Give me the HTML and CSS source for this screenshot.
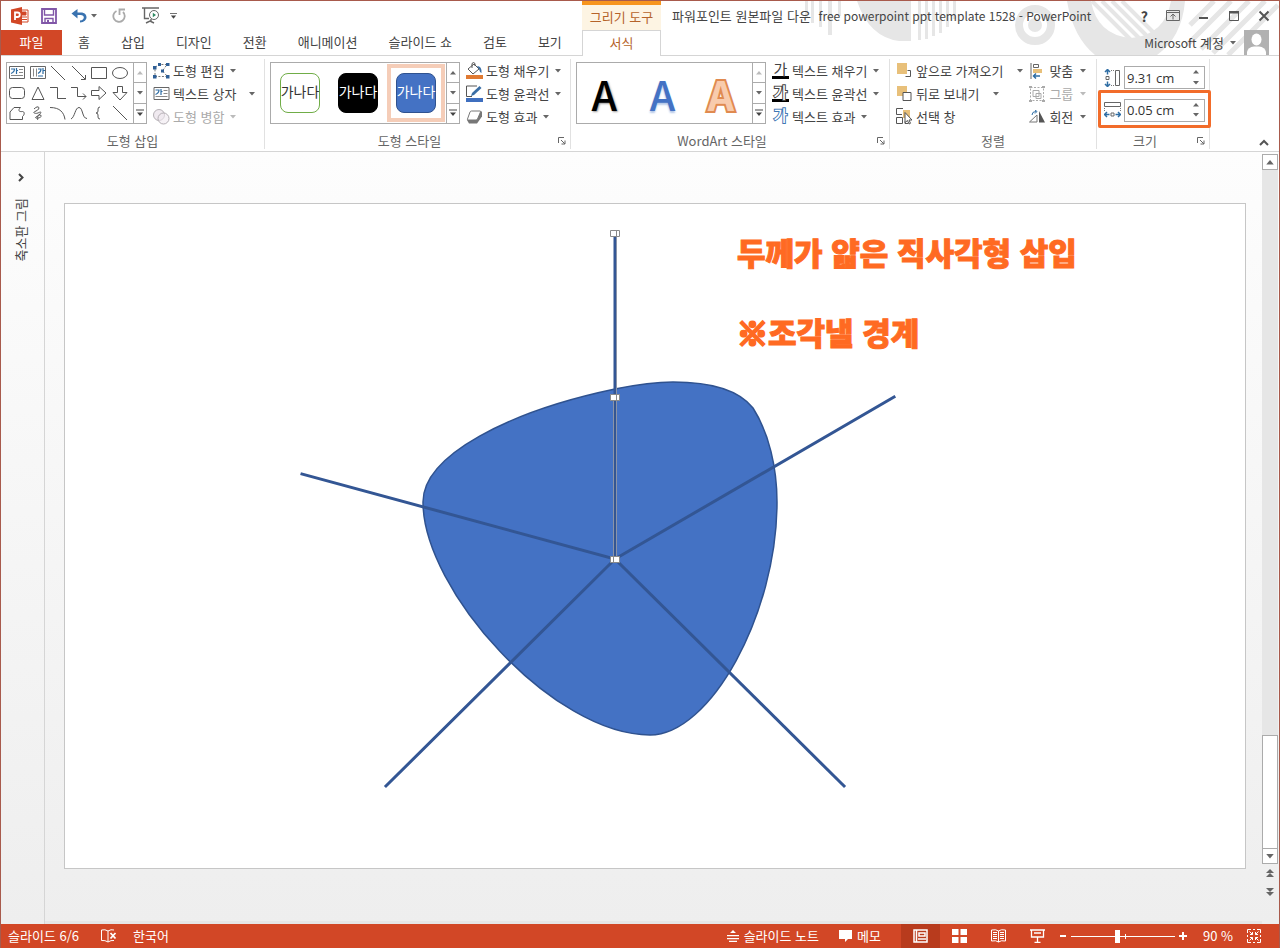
FILE: index.html
```html
<!DOCTYPE html>
<html lang="ko">
<head>
    <meta charset="UTF-8">
    <meta name="viewport" content="width=device-width, initial-scale=1.0">
    <title>파워포인트 원본파일 다운 free powerpoint ppt template 1528 - PowerPoint</title>
    <link rel="stylesheet" href="styles.css">
</head>
<body>
    <!-- Shared glyphs -->
    <svg class="defs" width="0" height="0" aria-hidden="true">
        <symbol id="caret" viewBox="0 0 6 4"><path d="M0 0h6L3 3.5z" fill="currentColor"/></symbol>
        <symbol id="caret-up" viewBox="0 0 6 4"><path d="M0 3.5h6L3 0z" fill="currentColor"/></symbol>
        <symbol id="more" viewBox="0 0 8 8"><path d="M0 .5h8v1H0zM1 3.5h6L4 7z" fill="currentColor"/></symbol>
        <symbol id="launch" viewBox="0 0 8 8"><path d="M.5 6V.5H6M3 3l4 4M7 3.500V7H3.500" fill="none" stroke="currentColor"/></symbol>
        <symbol id="textbox" viewBox="0 0 16 14">
            <path d="M.5.500h15v12H.5z" fill="#fff" stroke="#666"/>
            <path d="M10 3.500h4M10 6.500h4M2 9.500h12" stroke="#888"/>
            <path d="M2 3h3.500q0 3-3.500 4.500M7.500 2v6M7.500 4.500H9" fill="none" stroke="#2e6da4" stroke-width="1.200"/>
        </symbol>
    </svg>

    <div class="window">
        <header class="header">
            <svg class="backdrop" width="480" height="54" viewBox="800 0 480 54" fill="#e6e6e6" aria-hidden="true">
                <path d="M806 0h3v16h-3zM812 0h3v22h-3zM820 0h3v26h-3zM829 0h4v34h-4zM839 0h3v15h-3z"/>
                <path d="M858 0h42v40q-30-4-42-40zM900 0h12v40h-12zM919 0h3v39h-3zM926 0h3v38h-3zM933 0h3v35h-3zM940 0h3v32h-3zM947 0h3v26h-3zM954 0h3v18h-3z"/>
                <circle cx="1036" cy="24" r="16" fill="none" stroke="#e6e6e6" stroke-width="8"/>
                <circle cx="1036" cy="24" r="7"/>
                <path d="M1068 0h24q6 34 40 37 34-3 40-37h14q-3 36-28 54h-62q-22-18-28-54z"/>
                <path d="M1093 0l44 44M1103 0l44 44M1113 0l42 42M1123 0l36 36" stroke="#e6e6e6" stroke-width="4"/>
                <path d="M1215 0l-24 24M1232 0l-44 44M1250 0l-48 48M1266 0l-52 52M1279 4l-50 50" stroke="#e6e6e6" stroke-width="5"/>
            </svg>

            <div class="header-left">
                <div class="quick-access">
                    <svg class="app-logo" width="18" height="18" viewBox="0 0 18 18">
                        <path d="M9 3h8v12H9z" fill="#fff" stroke="#d24726"/>
                        <path d="M11 5h4v3h-4zM11 10h5M11 12.500h5" fill="#d24726" stroke="#d24726"/>
                        <path d="M0 2.500L11 0v18L0 15.500z" fill="#d24726"/>
                        <path d="M4 13V5.500h2.500a2 2 0 0 1 0 4.500H4" fill="none" stroke="#fff" stroke-width="1.800"/>
                    </svg>
                    <button class="icon-btn save" aria-label="저장">
                        <svg width="16" height="16" viewBox="0 0 16 16"><path d="M1 1h14v14H1z" fill="#fff" stroke="#8157a8" stroke-width="1.800"/><path d="M3.500 1v6h9V1M4 15v-4.500h8V15" fill="none" stroke="#8157a8" stroke-width="1.400"/><path d="M6 12h2v3H6z" fill="#8157a8"/></svg>
                    </button>
                    <button class="icon-btn undo" aria-label="실행 취소">
                        <svg width="17" height="14" viewBox="0 0 17 14"><path d="M6.500 0v3.500H10c7 0 8 9-1 10v-2c5-.5 5-5.500.500-5.500H6.500V9.500L.5 4.500z" fill="#3a73b0"/></svg>
                        <svg class="caret"><use href="#caret"/></svg>
                    </button>
                    <button class="icon-btn redo" aria-label="다시 실행">
                        <svg width="14" height="15" viewBox="0 0 14 15"><path d="M4.500 3A5.700 5.700 0 1 0 11 4M7.500 7V1.500H13" fill="none" stroke="#aaa" stroke-width="1.800"/></svg>
                    </button>
                    <button class="icon-btn present" aria-label="처음부터 시작">
                        <svg width="18" height="17" viewBox="0 0 18 17" fill="none" stroke="#666"><path d="M0 1h17M2.500 1v10.500H7M9 12v2M4 16l4-2 4 2" stroke-width="1.400"/><circle cx="12" cy="8" r="4.500" fill="#fff"/><path d="M10.800 5.800v4.400L14 8z" fill="#2f8a63" stroke="none"/></svg>
                    </button>
                    <button class="icon-btn" aria-label="빠른 실행 도구 모음 사용자 지정"><svg width="7" height="8"><use href="#more"/></svg></button>
                </div>
                <nav class="tabs">
                    <a class="tab tab-file" href="#">파일</a>
                    <a class="tab" href="#">홈</a>
                    <a class="tab" href="#">삽입</a>
                    <a class="tab" href="#">디자인</a>
                    <a class="tab" href="#">전환</a>
                    <a class="tab" href="#">애니메이션</a>
                    <a class="tab" href="#">슬라이드 쇼</a>
                    <a class="tab" href="#">검토</a>
                    <a class="tab" href="#">보기</a>
                </nav>
            </div>

            <div class="context-tab">
                <div class="context-title">그리기 도구</div>
                <a class="context-active" href="#">서식</a>
            </div>

            <div class="header-right">
                <div class="title-row">
                    <h1 class="title">파워포인트 원본파일 다운 <span class="latin">free powerpoint ppt template 1528 - PowerPoint</span></h1>
                    <div class="window-controls">
                        <button aria-label="도움말" class="help">?</button>
                        <button aria-label="리본 메뉴 표시 옵션"><svg width="14" height="12" viewBox="0 0 14 12" fill="none" stroke="#666"><path d="M.5.500h13v10H.5zM.5 2.500h13M7 9.500V4.500M4.500 6.500L7 4l2.500 2.500"/></svg></button>
                        <button aria-label="최소화"><svg width="12" height="12" viewBox="0 0 12 12"><path d="M1 7h9v2H1z" fill="#555"/></svg></button>
                        <button aria-label="최대화"><svg width="12" height="12" viewBox="0 0 12 12"><path d="M1.500 2v8.500h9V2" fill="none" stroke="#555"/><path d="M1 1h10v2.500H1z" fill="#555"/></svg></button>
                        <button aria-label="닫기"><svg width="12" height="12" viewBox="0 0 12 12"><path d="M1.500 1.500l9 9M10.500 1.500l-9 9" stroke="#555" stroke-width="2"/></svg></button>
                    </div>
                </div>
                <div class="account-row">
                    <button class="account"><span><span class="latin">Microsoft</span> 계정</span><svg class="caret"><use href="#caret"/></svg></button>
                    <svg class="avatar" width="25" height="25" viewBox="0 0 25 25"><path d="M0 0h25v25H0z" fill="#b1b1b1"/><ellipse cx="12.500" cy="9.500" rx="5" ry="6" fill="#fff"/><path d="M3 25v-3q1-5 7-5.500h5q6 .5 7 5.500v3z" fill="#fff"/></svg>
                </div>
            </div>
        </header>

        <section class="ribbon">
            <div class="group group-insert">
                <div class="group-body">
                    <div class="gallery">
                        <div class="shape-grid">
                            <button aria-label="텍스트 상자"><svg width="16" height="14"><use href="#textbox"/></svg></button>
                            <button aria-label="세로 텍스트 상자"><svg width="16" height="14" viewBox="0 0 16 14"><path d="M.5.500h15v12H.5z" fill="#fff" stroke="#666"/><path d="M3.500 2.500v8M6.500 2.500v8" stroke="#888"/><path d="M8 3h3q0 3-3 4.500M13 2v6M13 4.500h2M8 10h5" fill="none" stroke="#2e6da4" stroke-width="1.200"/></svg></button>
                            <button aria-label="선"><svg class="shape"><path d="M1 0l14 14"/></svg></button>
                            <button aria-label="화살표"><svg class="shape"><path d="M1 0l13 13M14.500 9v4.500H10"/></svg></button>
                            <button aria-label="직사각형"><svg class="shape"><path d="M.5 1.500h15v11H.5z"/></svg></button>
                            <button aria-label="타원"><svg class="shape"><ellipse cx="8" cy="7" rx="7.500" ry="5.500"/></svg></button>
                            <button aria-label="둥근 직사각형"><svg class="shape"><rect x=".5" y="1.500" width="15" height="11" rx="3"/></svg></button>
                            <button aria-label="삼각형"><svg class="shape"><path d="M8 1l6 12.500H2z"/></svg></button>
                            <button aria-label="꺾인 연결선"><svg class="shape"><path d="M0 1.500h7.500v11H16"/></svg></button>
                            <button aria-label="꺾인 화살표"><svg class="shape"><path d="M0 1.500h6.500v9H15M12 7.500l3 3-3 3"/></svg></button>
                            <button aria-label="오른쪽 화살표"><svg class="shape"><path d="M.5 4.500H8V.5L15 7l-7 6.500v-4H.5z"/></svg></button>
                            <button aria-label="아래쪽 화살표"><svg class="shape"><path d="M5.500.500v6h-4.500L8 14l7-7.500h-4.500v-6z"/></svg></button>
                            <button aria-label="자유형"><svg class="shape"><path d="M1 13.500V6l4-4.500h6.500c-3 3-1.500 4.500 2 4 2 0 2.500 3 0 5v3z"/></svg></button>
                            <button aria-label="자유 곡선"><svg class="shape"><path d="M4 3c5-5 7 0 2 2s0 3 2 2 4-2 2 1-6 3-4 4 8-2 4-3-1 5-3 5"/></svg></button>
                            <button aria-label="호"><svg class="shape"><path d="M0 1.500c10 0 14 5 15 12"/></svg></button>
                            <button aria-label="곡선"><svg class="shape"><path d="M0 13C4 11 4 1.500 8 1.500s3 11 8 11"/></svg></button>
                            <button aria-label="중괄호"><svg class="shape"><path d="M9 1Q7 1 7 3v2q0 2-2 2 2 0 2 2v2q0 2 2 2"/></svg></button>
                            <button aria-label="선"><svg class="shape"><path d="M1 0l14 14"/></svg></button>
                        </div>
                        <div class="gallery-scroll">
                            <button disabled aria-label="위로"><svg class="caret"><use href="#caret-up"/></svg></button>
                            <button aria-label="아래로"><svg class="caret"><use href="#caret"/></svg></button>
                            <button aria-label="자세히"><svg width="8" height="8"><use href="#more"/></svg></button>
                        </div>
                    </div>
                    <div class="commands">
                        <button class="cmd">
                            <svg width="17" height="16" viewBox="0 0 17 16"><path d="M2 4l5-2.500h7L9.500 8l5 5.500H2z" fill="none" stroke="#777" stroke-dasharray="2 1.500"/><path d="M0 3h3.500v3.500H0zM5 0h3v3H5zM13 0h3.500v3H13zM8 6.500h3v3H8zM0 12h3.500v3.500H0zM13 12h3.500v3.500H13z" fill="#2f5f96"/></svg>
                            도형 편집<svg class="caret"><use href="#caret"/></svg>
                        </button>
                        <button class="cmd split">
                            <svg width="17" height="14"><use href="#textbox"/></svg>
                            텍스트 상자<svg class="caret"><use href="#caret"/></svg>
                        </button>
                        <button class="cmd" disabled>
                            <svg width="17" height="16" viewBox="0 0 17 16"><g fill="#f0eaf0" stroke="#b5b0b5"><circle cx="6" cy="6" r="5.500"/><circle cx="10.500" cy="9.500" r="5.500" fill-opacity=".6"/></g></svg>
                            도형 병합<svg class="caret"><use href="#caret"/></svg>
                        </button>
                    </div>
                </div>
                <div class="group-footer"><span>도형 삽입</span></div>
            </div>

            <div class="group group-styles">
                <div class="group-body">
                    <div class="gallery">
                        <div class="style-list">
                            <button class="swatch"><span class="swatch-outline">가나다</span></button>
                            <button class="swatch"><span class="swatch-black">가나다</span></button>
                            <button class="swatch selected"><span class="swatch-blue">가나다</span></button>
                        </div>
                        <div class="gallery-scroll">
                            <button aria-label="위로"><svg class="caret"><use href="#caret-up"/></svg></button>
                            <button aria-label="아래로"><svg class="caret"><use href="#caret"/></svg></button>
                            <button aria-label="자세히"><svg width="8" height="8"><use href="#more"/></svg></button>
                        </div>
                    </div>
                    <div class="commands">
                        <button class="cmd">
                            <svg width="17" height="17" viewBox="0 0 17 17"><path d="M2 7l6-5 5 5-6 5z" fill="#fff" stroke="#555"/><path d="M6 6V1.500q1.500-2 3 0V4" fill="none" stroke="#555"/><path d="M11 4q5 0 4.500 7-2-1-2.500-4z" fill="#3a6ea5"/><path d="M0 13h17v4H0z" fill="#e07a32"/></svg>
                            도형 채우기<svg class="caret"><use href="#caret"/></svg>
                        </button>
                        <button class="cmd">
                            <svg width="17" height="17" viewBox="0 0 17 17"><path d="M11 1H.5v10.500H6" fill="none" stroke="#555"/><path d="M5 11l1-3 7.500-7 2 2L8 10z" fill="#3a6ea5"/><path d="M0 13h17v4H0z" fill="#3f6fbf"/></svg>
                            도형 윤곽선<svg class="caret"><use href="#caret"/></svg>
                        </button>
                        <button class="cmd">
                            <svg width="17" height="14" viewBox="0 0 17 14"><path d="M1 10l2 3.500h8l5-7V2L15 1z" fill="#777"/><path d="M5.500 1H14q1 0 .5 1l-3 7q-.5 1-1.500 1H2q-1 0-.5-1L4 2q.5-1 1.500-1z" fill="#fff" stroke="#777"/></svg>
                            도형 효과<svg class="caret"><use href="#caret"/></svg>
                        </button>
                    </div>
                </div>
                <div class="group-footer"><span>도형 스타일</span><button aria-label="도형 서식"><svg width="8" height="8"><use href="#launch"/></svg></button></div>
            </div>

            <div class="group group-wordart">
                <div class="group-body">
                    <div class="gallery">
                        <div class="style-list">
                            <button class="wordart wordart-black">A</button>
                            <button class="wordart wordart-blue">A</button>
                            <button class="wordart wordart-orange">A</button>
                        </div>
                        <div class="gallery-scroll">
                            <button disabled aria-label="위로"><svg class="caret"><use href="#caret-up"/></svg></button>
                            <button aria-label="아래로"><svg class="caret"><use href="#caret"/></svg></button>
                            <button aria-label="자세히"><svg width="8" height="8"><use href="#more"/></svg></button>
                        </div>
                    </div>
                    <div class="commands">
                        <button class="cmd">
                            <span class="glyph glyph-bar">가</span>
                            텍스트 채우기<svg class="caret"><use href="#caret"/></svg>
                        </button>
                        <button class="cmd">
                            <span class="glyph glyph-bar glyph-hollow">가</span>
                            텍스트 윤곽선<svg class="caret"><use href="#caret"/></svg>
                        </button>
                        <button class="cmd">
                            <span class="glyph glyph-glow">가</span>
                            텍스트 효과<svg class="caret"><use href="#caret"/></svg>
                        </button>
                    </div>
                </div>
                <div class="group-footer"><span>WordArt 스타일</span><button aria-label="텍스트 효과 서식"><svg width="8" height="8"><use href="#launch"/></svg></button></div>
            </div>

            <div class="group group-arrange">
                <div class="group-body">
                    <div class="commands">
                        <button class="cmd split">
                            <svg width="16" height="15" viewBox="0 0 16 15"><path d="M9.500 13.500h5v-6h-3" fill="none" stroke="#555"/><path d="M1 0h10v11H1z" fill="#e8c07a"/></svg>
                            앞으로 가져오기<svg class="caret"><use href="#caret"/></svg>
                        </button>
                        <button class="cmd split">
                            <svg width="16" height="15" viewBox="0 0 16 15"><path d="M1 0h10v10H1z" fill="#e8c07a"/><path d="M7 6.500h8v8H7z" fill="#fff" stroke="#555"/></svg>
                            뒤로 보내기<svg class="caret"><use href="#caret"/></svg>
                        </button>
                        <button class="cmd">
                            <svg width="16" height="17" viewBox="0 0 16 17"><path d="M7 2h7v8H7z" fill="#e8c07a"/><path d="M7 .5H.5v6H6M.5 9.500h6v6h-6zM9 13.500v2h3" fill="none" stroke="#555"/><path d="M9 4.500v10l2.500-2 1.500 3.500 1.500-.700L13 12h3z" fill="#fff" stroke="#555"/></svg>
                            선택 창
                        </button>
                    </div>
                    <div class="commands commands-align">
                        <button class="cmd">
                            <svg width="16" height="16" viewBox="0 0 16 16"><path d="M2 0v16" stroke="#666"/><path d="M4.500 1.500h5v3h-5z" fill="#fff" stroke="#666"/><path d="M4 6h9v4H4z" fill="#e8c07a"/><path d="M4 13h7M7 10.500L4.500 13 7 15.500" fill="none" stroke="#2e6da4" stroke-width="1.500"/></svg>
                            맞춤<svg class="caret"><use href="#caret"/></svg>
                        </button>
                        <button class="cmd" disabled>
                            <svg width="16" height="16" viewBox="0 0 16 16" fill="none" stroke="#aaa"><path d="M1.500 1.500h13v13h-13z" stroke-dasharray="2 1.500"/><path d="M4 4.500h6v6H4zM7 7.500h5v5H7z"/><path d="M0 1h3M13 1h3M0 15h3M13 15h3" stroke-width="2"/></svg>
                            그룹<svg class="caret"><use href="#caret"/></svg>
                        </button>
                        <button class="cmd">
                            <svg width="16" height="13" viewBox="0 0 16 13"><path d="M.5 12L8 5v7z" fill="#fff" stroke="#777"/><path d="M10 1l6 11.500h-6z" fill="#555"/><path d="M3 5q0-3.500 4-3.500M6 0l2 1.500L6 3.500" fill="none" stroke="#2e6da4"/></svg>
                            회전<svg class="caret"><use href="#caret"/></svg>
                        </button>
                    </div>
                </div>
                <div class="group-footer"><span>정렬</span></div>
            </div>

            <div class="group group-size">
                <div class="group-body size-body">
                    <div class="size-row">
                        <label for="shape-height" aria-label="높이"><svg width="17" height="18" viewBox="0 0 17 18"><path d="M3.500.500v5M1 3l2.500-2.500L6 3M3.500 17.500v-5M1 15l2.500 2.500L6 15" fill="none" stroke="#2e6da4" stroke-width="1.500"/><path d="M2 7.500h3v3H2zM11.500 1.500h4v15h-4z" fill="#fff" stroke="#666"/><path d="M7 1.500h3M7 16.500h3" stroke="#777" stroke-dasharray="1 1"/></svg></label>
                        <div class="spinner">
                            <input id="shape-height" type="text" value="9.31 cm">
                            <div class="spin-buttons">
                                <button aria-label="높이 증가"><svg class="caret"><use href="#caret-up"/></svg></button>
                                <button aria-label="높이 감소"><svg class="caret"><use href="#caret"/></svg></button>
                            </div>
                        </div>
                    </div>
                    <div class="size-row highlight">
                        <label for="shape-width" aria-label="너비"><svg width="17" height="18" viewBox="0 0 17 18"><path d="M.500 13.500h5M3 11L.5 13.500 3 16M16.500 13.500h-5M14 11l2.500 2.500L14 16" fill="none" stroke="#2e6da4" stroke-width="1.500"/><path d="M7 12h3v3H7zM.5 1.500h16v4H.5z" fill="#fff" stroke="#666"/><path d="M.5 7v3M16.500 7v3" stroke="#777" stroke-dasharray="1 1"/></svg></label>
                        <div class="spinner">
                            <input id="shape-width" type="text" value="0.05 cm">
                            <div class="spin-buttons">
                                <button aria-label="너비 증가"><svg class="caret"><use href="#caret-up"/></svg></button>
                                <button aria-label="너비 감소"><svg class="caret"><use href="#caret"/></svg></button>
                            </div>
                        </div>
                    </div>
                </div>
                <div class="group-footer"><span>크기</span><button aria-label="크기 및 위치"><svg width="8" height="8"><use href="#launch"/></svg></button></div>
            </div>

            <button class="collapse" aria-label="리본 메뉴 축소"><svg width="10" height="7" viewBox="0 0 10 7"><path d="M1 6l4-4 4 4" fill="none" stroke="#555" stroke-width="2"/></svg></button>
        </section>

        <main class="workspace">
            <button class="thumb-pane">
                <svg width="6" height="9" viewBox="0 0 6 9"><path d="M1 1l3.500 3.500L1 8" fill="none" stroke="#444" stroke-width="2"/></svg>
                <span>축소판 그림</span>
            </button>

            <div class="stage">
                <!-- viewBox keeps the window's coordinates -->
                <svg class="slide" viewBox="65 204 1180 664">
                    <path class="blob" d="M423 502C423 455 510 411 615 389 635 385 655 382 673 382 708 382 738 389 753 408 769 433 777 468 777 502 777 615 710 735 650 735 553 735 423 590 423 502z"/>
                    <g class="cuts">
                        <path d="M615 559L894 397"/>
                        <path d="M615 559L302 474"/>
                        <path d="M615 559L386 786"/>
                        <path d="M615 559L844 786"/>
                        <path d="M615 233V559"/>
                    </g>
                    <path class="selection" d="M613.500 397V559M616.500 233V559"/>
                    <g class="handles">
                        <path d="M610.500 230.500h9v6h-9zM616.500 230.500v6"/>
                        <path d="M610.500 394.500h9v6h-9zM616.500 394.500v6"/>
                        <path d="M610.500 556.500h9v6h-9zM613.500 556.500v6"/>
                    </g>
                    <text class="note" x="737" y="265">두께가 얇은 직사각형 삽입</text>
                    <text class="note" x="737" y="345"><tspan class="mark">※</tspan>조각낼 경계</text>
                </svg>
            </div>

            <div class="scrollbar">
                <button class="scroll-btn" aria-label="위로 스크롤"><svg width="8" height="5"><use href="#caret-up"/></svg></button>
                <div class="track"><div class="thumb"></div></div>
                <button class="scroll-btn" aria-label="아래로 스크롤"><svg width="8" height="5"><use href="#caret"/></svg></button>
                <button class="page-btn" aria-label="이전 슬라이드"><svg width="8" height="9" viewBox="0 0 8 9"><path d="M4 0l4 4H0zM4 4l4 4H0z" fill="#666"/></svg></button>
                <button class="page-btn" aria-label="다음 슬라이드"><svg width="8" height="9" viewBox="0 0 8 9"><path d="M0 1h8L4 5zM0 5h8L4 9z" fill="#666"/></svg></button>
            </div>
        </main>

        <footer class="status">
            <span class="status-count">슬라이드 6/6</span>
            <button class="status-proof" aria-label="맞춤법 검사"><svg width="16" height="14" viewBox="0 0 16 14" fill="none" stroke="#fff"><path d="M7 2Q4 0 .5 1v10.500Q4 11 7 13q3-2 6-1.500M7 2v11M7 2q3-2 6-1"/><path d="M9.500 4l5 5.500M14.500 4l-5 5.500" stroke-width="1.800"/></svg></button>
            <button class="status-lang">한국어</button>

            <div class="status-right">
                <button class="status-notes"><svg width="12" height="12" viewBox="0 0 12 12"><path d="M6 0l3 3H3zM0 5h12v1.300H0zM0 8h12v1.300H0zM2 10.700h8V12H2z" fill="#fff"/></svg>슬라이드 노트</button>
                <button class="status-memo"><svg width="13" height="12" viewBox="0 0 13 12"><path d="M0 0h13v9H9l-3 3V9H0z" fill="#fff"/></svg>메모</button>
                <div class="views">
                    <button class="active" aria-label="기본"><svg width="15" height="14" viewBox="0 0 15 14" fill="none" stroke="#fff" stroke-width="1.500"><path d="M1 1h13v12H1zM3.500 1v12M6 4h6v3H6zM5 10h8"/></svg></button>
                    <button aria-label="여러 슬라이드"><svg width="15" height="14" viewBox="0 0 15 14"><path d="M0 0h6.500v6H0zM8.500 0H15v6H8.500zM0 8h6.500v6H0zM8.500 8H15v6H8.500z" fill="#fff"/></svg></button>
                    <button aria-label="읽기용 보기"><svg width="15" height="14" viewBox="0 0 15 14" fill="none" stroke="#fff"><path d="M7.500 2Q5 0 .5 1v11q4.500-1 7 1 2.500-2 7-1V1q-4.500-1-7 1zM7.500 2v11M2 3.500h4M2 5.500h4M2 7.500h4M2 9.500h4M9 3.500h4M9 5.500h4M9 7.500h4M9 9.500h4"/></svg></button>
                    <button aria-label="슬라이드 쇼"><svg width="15" height="14" viewBox="0 0 15 14" fill="none" stroke="#fff"><path d="M0 1h15M1.500 1.500v6.500h12V1.500M4 4h7M7.500 8v5M4.500 13.500h6" stroke-width="1.300"/></svg></button>
                </div>
                <button class="zoom-step" aria-label="축소"><svg width="8" height="8" viewBox="0 0 8 8"><path d="M1 3h6v2H1z" fill="#fff"/></svg></button>
                <input class="zoom" type="range" min="10" max="200" value="95" aria-label="확대/축소">
                <button class="zoom-step" aria-label="확대"><svg width="8" height="8" viewBox="0 0 8 8"><path d="M0 3h8v2H0zM3 0h2v8H3z" fill="#fff"/></svg></button>
                <span class="zoom-value">90 %</span>
                <button class="fit" aria-label="창에 맞춤"><svg width="14" height="14" viewBox="0 0 14 14" fill="none" stroke="#fff"><path d="M.5 4V.5H4M6 .5h2M10 .5h3.500V4M13.500 6v2M13.500 10v3.500H10M8 13.500H6M4 13.500H.5V10M.5 8V6"/><path d="M5.500 3v2.500H3M8.500 3v2.500H11M5.500 11V8.500H3M8.500 11V8.500H11M2.500 2.500l3 3M11.500 2.500l-3 3M2.500 11.500l3-3M11.500 11.500l-3-3"/></svg></button>
            </div>
        </footer>
    </div>
</body>
</html>
```
FILE: styles.css
```css
* {
    margin: 0;
    padding: 0;
    box-sizing: border-box;
}

body {
    font-family: "Noto Sans CJK KR", "Open Sans", sans-serif;
    font-size: 13px;
    line-height: 16px;
    color: #444;
}

button {
    font: inherit;
    color: inherit;
    background: none;
    border: none;
    cursor: pointer;
    display: flex;
    align-items: center;
    justify-content: center;
    white-space: nowrap;
}

button:disabled {
    color: #aaa;
    cursor: default;
}

a {
    color: inherit;
    text-decoration: none;
}

svg {
    display: block;
    flex: none;
}

.defs {
    position: absolute;
}

.caret {
    width: 6px;
    height: 4px;
    color: #666;
}

button:disabled .caret {
    color: #bbb;
}

.latin {
    font-size: 12px;
}

.window {
    min-height: 100vh;
    display: flex;
    flex-direction: column;
    border: 1px solid #a85a4c;
    border-bottom: none;
    background: #fff;
}

/* Title bar and tabs */
.header {
    position: relative;
    display: flex;
    height: 55px;
}

.backdrop {
    position: absolute;
    top: 0;
    right: 0;
}

.header-left {
    flex: none;
    width: 581px;
    border-bottom: 1px solid #d5d5d5;
}

.quick-access {
    display: flex;
    align-items: center;
    height: 29px;
    padding-left: 10px;
}

.icon-btn {
    gap: 3px;
    height: 20px;
}

.save {
    margin-left: 12px;
}

.undo {
    margin-left: 14px;
}

.redo {
    margin-left: 15px;
}

.present {
    margin: 0 10px 0 16px;
}

.tabs {
    display: flex;
    gap: 1px;
}

.tab {
    height: 25px;
    padding: 0 15px;
    line-height: 24px;
    white-space: nowrap;
}

.tab-file {
    width: 61px;
    padding: 0;
    text-align: center;
    color: #fff;
    background: #d24726;
}

.context-tab {
    flex: none;
    width: 79px;
    text-align: center;
    color: #b5632a;
}

.context-title {
    height: 29px;
    line-height: 24px;
    border-top: 4px solid #f7941d;
    background: #fdf4e3;
}

.context-active {
    display: block;
    height: 26px;
    line-height: 23px;
    border: 1px solid #d5d5d5;
    border-bottom: none;
    background: #fff;
}

.header-right {
    position: relative;
    flex: 1;
    min-width: 0;
    border-bottom: 1px solid #d5d5d5;
}

.title-row {
    display: flex;
    align-items: center;
    justify-content: space-between;
    height: 29px;
    padding: 0 9px 0 11px;
}

.title {
    font-size: 13px;
    font-weight: normal;
    white-space: nowrap;
}

.title .latin {
    margin-left: 4px;
}

.window-controls {
    display: flex;
    gap: 18px;
}

.help {
    font-size: 14px;
    font-weight: bold;
}

.account-row {
    display: flex;
    justify-content: flex-end;
    gap: 8px;
    height: 25px;
    padding-right: 10px;
}

.account {
    gap: 6px;
}

/* Ribbon */
.ribbon {
    display: flex;
    height: 96px;
    padding-top: 3px;
    border-bottom: 1px solid #d5d5d5;
}

.group {
    flex: none;
    display: flex;
    flex-direction: column;
    height: 90px;
    padding-left: 5px;
    border-right: 1px solid #e1e1e1;
}

.group-insert {
    width: 264px;
}

.group-styles {
    width: 306px;
}

.group-wordart {
    width: 319px;
}

.group-arrange {
    width: 207px;
}

.group-size {
    width: 113px;
}

.group-body {
    display: flex;
    height: 69px;
    gap: 5px;
}

.group-footer {
    display: flex;
    align-items: center;
    margin: 5px 0 0 -5px;
    height: 16px;
    color: #666;
}

.group-footer span {
    flex: 1;
    text-align: center;
}

.group-footer button {
    width: 16px;
    height: 16px;
}

.gallery {
    display: flex;
    height: 62px;
    margin-top: 3px;
    border: 1px solid #ababab;
}

.gallery-scroll {
    display: flex;
    flex-direction: column;
    width: 13px;
    border-left: 1px solid #ababab;
}

.gallery-scroll button {
    flex: 1;
}

.gallery-scroll button + button {
    border-top: 1px solid #ababab;
}

.shape-grid {
    display: grid;
    grid-template-columns: repeat(6, 1fr);
    grid-template-rows: repeat(3, 20px);
    width: 126px;
    padding-right: 3px;
}

.shape {
    width: 16px;
    height: 14px;
    fill: none;
    stroke: #555;
}

.style-list {
    display: flex;
    align-items: center;
    width: 175px;
}

.swatch {
    width: 58px;
    height: 58px;
    border: 4px solid transparent;
}

.swatch.selected {
    border-color: #f5cdb8;
}

.swatch span {
    display: flex;
    justify-content: center;
    width: 40px;
    height: 40px;
    border: 1px solid;
    border-radius: 8px;
    font-size: 14px;
    line-height: 34px;
}

.swatch .swatch-outline {
    color: #333;
    border-color: #70ad47;
}

.swatch .swatch-black {
    color: #fff;
    background: #000;
    border-color: #000;
}

.swatch .swatch-blue {
    color: #fff;
    background: #4472c4;
    border-color: #2f528f;
}

.wordart {
    flex: 1;
    height: 60px;
    padding-right: 4px;
    font-family: "Noto Sans CJK KR", sans-serif;
    font-size: 41px;
    font-weight: 500;
}

.wordart-black {
    color: #000;
    text-shadow: 1px 1px 2px #999;
}

.wordart-blue {
    color: #4472c4;
    text-shadow: 0 2px 2px #b4c7e7;
}

.wordart-orange {
    color: #f8cbad;
    font-weight: 700;
    paint-order: stroke fill;
    -webkit-text-stroke: 4px #e08a50;
}

.commands {
    display: flex;
    flex-direction: column;
    align-items: flex-start;
}

.cmd {
    height: 23px;
    gap: 3px;
    padding-left: 1px;
}

.cmd .caret {
    margin-left: 3px;
}

.split .caret {
    margin-left: 10px;
}

.group-arrange .group-body {
    justify-content: space-between;
    padding-right: 10px;
}

.group-arrange .cmd {
    gap: 4px;
}

.glyph {
    width: 17px;
    height: 17px;
    font-size: 15px;
    line-height: 14px;
    text-align: center;
}

.glyph-bar {
    border-bottom: 3px solid #000;
}

.glyph-hollow {
    color: #fff;
    font-weight: 500;
    paint-order: stroke fill;
    -webkit-text-stroke: 2px #444;
}

.glyph-glow {
    color: #fff;
    font-weight: 500;
    paint-order: stroke fill;
    -webkit-text-stroke: 2px #3f78b5;
}

.size-body {
    flex-direction: column;
    gap: 0;
    margin-left: -5px;
}

.size-row {
    display: flex;
    align-items: center;
    gap: 3px;
    height: 31px;
    padding: 6px 4px 0 7px;
}

.highlight {
    position: relative;
    height: 38px;
    padding-top: 2px;
}

/* orange callout drawn over the ribbon */
.highlight::after {
    content: "";
    position: absolute;
    inset: 0 -2px 0 1px;
    border: 3px solid #f26c2a;
    border-radius: 2px;
    pointer-events: none;
}

.spinner {
    display: flex;
    flex: 1;
    height: 23px;
    border: 1px solid #ababab;
    background: #fff;
}

.spinner input {
    width: 62px;
    padding-left: 2px;
    border: none;
    outline: none;
    font: inherit;
    font-family: "Open Sans", sans-serif;
    color: #333;
}

.spin-buttons {
    display: flex;
    flex: 1;
    flex-direction: column;
}

.spin-buttons button {
    flex: 1;
}

.collapse {
    align-self: flex-end;
    margin: 0 9px 3px auto;
    width: 12px;
    height: 12px;
}

/* Editing area */
.workspace {
    flex: 1;
    display: flex;
    background: linear-gradient(#fdfdfd, #eee);
}

.thumb-pane {
    width: 44px;
    flex-direction: column;
    justify-content: flex-start;
    gap: 16px;
    padding: 21px 4px 0 0;
    border-right: 1px solid #d5d5d5;
}

.thumb-pane span {
    writing-mode: vertical-rl;
    text-orientation: sideways;
    transform: rotate(180deg);
}

.stage {
    flex: 1;
    min-width: 0;
    padding: 51px 16px 51px 19px;
    border-bottom: 3px solid #e6e6e6;
}

.slide {
    width: 100%;
    aspect-ratio: 1182 / 666;
    border: 1px solid #c6c6c6;
    background: #fff;
}

.blob {
    fill: #4472c4;
    stroke: #2f528f;
    stroke-width: 1.5;
}

.cuts {
    fill: none;
    stroke: #335694;
    stroke-width: 3;
    stroke-linecap: square;
}

.selection {
    fill: none;
    stroke: #8a94a8;
}

.handles {
    fill: #fff;
    stroke: #8a8a8a;
}

.note {
    font-family: "Noto Sans CJK KR", sans-serif;
    font-size: 31px;
    font-weight: 900;
    fill: #ff6a22;
    stroke: #ff6a22;
}

.mark {
    stroke-width: 3;
}

.scrollbar {
    display: flex;
    flex-direction: column;
    width: 17px;
    padding: 2px 1px 24px 0;
}

.scroll-btn {
    height: 16px;
    border: 1px solid #ababab;
    background: #fff;
    color: #666;
}

.track {
    flex: 1;
    display: flex;
    flex-direction: column;
    justify-content: flex-end;
    background: #e6e6e6;
}

.thumb {
    height: 113px;
    border: 1px solid #ababab;
    border-bottom: none;
    background: #fff;
}

.page-btn {
    height: 18px;
}

/* Status bar */
.status {
    display: flex;
    align-items: center;
    height: 24px;
    padding: 0 18px 0 7px;
    color: #fff;
    background: #d24726;
}

.status button {
    height: 24px;
}

.status-proof {
    margin: 0 16px 0 22px;
}

.status-right {
    display: flex;
    align-items: center;
    margin-left: auto;
}

.status-notes,
.status-memo {
    gap: 5px;
    margin-right: 20px;
}

.views {
    display: flex;
}

.views button {
    width: 39px;
}

.views .active {
    background: #b83b1d;
}

.zoom-step {
    width: 12px;
}

.zoom {
    appearance: none;
    width: 104px;
    height: 16px;
    margin: 0 2px;
    background:
        linear-gradient(#fff, #fff) 52% 50% / 1px 5px no-repeat,
        linear-gradient(#fff, #fff) center / 100% 1px no-repeat;
}

.zoom::-webkit-slider-thumb {
    appearance: none;
    width: 5px;
    height: 13px;
    background: #fff;
}

.zoom-value {
    margin: 0 14px;
    white-space: nowrap;
}
```
